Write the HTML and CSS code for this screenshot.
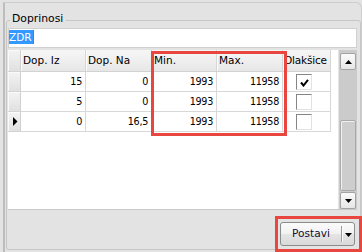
FILE: index.html
```html
<!DOCTYPE html>
<html>
<head>
<meta charset="utf-8">
<link rel="stylesheet" href="styles.css">
</head>
<body>
<div class="window">
  <div class="group">
    <span class="group-title">Doprinosi</span>
    <div class="textbox"><span class="sel">ZDR</span></div>
    <div class="grid">
      <div class="table">
        <div class="row head">
          <div class="cell ind"></div>
          <div class="cell">Dop. Iz</div>
          <div class="cell">Dop. Na</div>
          <div class="cell">Min.</div>
          <div class="cell">Max.</div>
          <div class="cell last">Olakšice</div>
        </div>
        <div class="row">
          <div class="cell ind"></div>
          <div class="cell num">15</div>
          <div class="cell num">0</div>
          <div class="cell num">1993</div>
          <div class="cell num">11958</div>
          <div class="cell chk"><span class="checkbox"><svg width="9" height="8" viewBox="0 0 9 8"><path d="M1 3.5 L3.5 6.5 L8 0.8" fill="none" stroke="#000" stroke-width="2"/></svg></span></div>
        </div>
        <div class="row">
          <div class="cell ind"></div>
          <div class="cell num">5</div>
          <div class="cell num">0</div>
          <div class="cell num">1993</div>
          <div class="cell num">11958</div>
          <div class="cell chk"><span class="checkbox"></span></div>
        </div>
        <div class="row">
          <div class="cell ind current"><svg width="5" height="9" viewBox="0 0 5 9"><path d="M0 0 L4.5 4.5 L0 9 Z" fill="#000"/></svg></div>
          <div class="cell num">0</div>
          <div class="cell num">16,5</div>
          <div class="cell num">1993</div>
          <div class="cell num">11958</div>
          <div class="cell chk"><span class="checkbox"></span></div>
        </div>
      </div>
      <div class="scrollbar">
        <div class="sb-btn"><svg width="7" height="4" viewBox="0 0 7 4"><path d="M0 4 L3.5 0 L7 4 Z" fill="#000"/></svg></div>
        <div class="sb-track"><div class="sb-thumb"></div></div>
        <div class="sb-btn"><svg width="7" height="4" viewBox="0 0 7 4"><path d="M0 0 L7 0 L3.5 4 Z" fill="#000"/></svg></div>
      </div>
    </div>
    <div class="actions">
      <div class="split-btn">
        <span class="btn-main">Postavi</span>
        <span class="btn-arrow"><svg width="7" height="4" viewBox="0 0 7 4"><path d="M0 0 L7 0 L3.5 4 Z" fill="#000"/></svg></span>
      </div>
    </div>
  </div>
</div>
<div class="hl hl-minmax"></div>
<div class="hl hl-button"></div>
</body>
</html>
```
FILE: styles.css
```css
body {
  margin: 0;
  width: 362px;
  height: 252px;
  overflow: hidden;
  position: relative;
  background: #e3e3e3;
  font-family: "DejaVu Sans", Verdana, sans-serif;
  font-size: 10.5px;
  color: #000;
}

.window {
  margin: 2px 0 0 3px;
  height: 250px;
  box-sizing: border-box;
  border-left: 2px solid #bdbdbd;
  border-top: 1px solid #cdcdcd;
  border-right: 1px solid #cdcdcd;
  border-top-right-radius: 6px;
  padding-left: 1px;
}

.group {
  position: relative;
  margin-top: 17px;
  height: 230px;
  box-sizing: border-box;
  border: 1px solid #c6c6c6;
  border-radius: 3px;
  padding: 7px 3px 0 1px;
}

.group-title {
  position: absolute;
  left: 3px;
  top: -9px;
  padding: 0 3px 0 2px;
  background: #e3e3e3;
  font-size: 10.8px;
  line-height: 14px;
}

.textbox {
  height: 20px;
  box-sizing: border-box;
  border: 1px solid #d0d0d0;
  background: #fff;
  padding-top: 1px;
  line-height: 14px;
}

.sel {
  display: inline-block;
  background: #3399ff;
  color: #fff;
  line-height: 14px;
  padding-right: 1px;
  border-right: 1px solid #cc6600;
}

.grid {
  margin-top: 2px;
  height: 160px;
  box-sizing: border-box;
  border-bottom: 1px solid #c8c8c8;
  background: #fff;
  display: flex;
}

.table {
  width: 323px;
}

.row {
  display: grid;
  grid-template-columns: 13px 65px 66px 65px 66px 48px;
  height: 20px;
}

.row.head {
  height: 22px;
}

.cell {
  box-sizing: border-box;
  border-right: 1px solid #d8d8d8;
  border-bottom: 1px solid #d8d8d8;
  padding: 0 3px 0 2px;
  line-height: 19px;
  white-space: nowrap;
  overflow: hidden;
}

.head .cell {
  line-height: 21px;
  background: linear-gradient(to bottom, #f6f6f6 0%, #efefef 50%, #e7e7e7 100%);
  border-right-color: #d6d6d6;
  border-bottom-color: #d2d2d2;
  box-shadow: inset 1px 0 0 #fbfbfb;
}

.head .cell.last {
  padding-left: 1px;
  letter-spacing: -0.2px;
}

.cell.ind {
  padding: 0;
  background: linear-gradient(to bottom, #f3f3f3 0%, #e9e9e9 55%, #e0e0e0 100%);
  border-right-color: #d0d0d0;
  border-bottom-color: #d4d4d4;
  box-shadow: inset 1px 1px 0 #fafafa;
}

.cell.current {
  display: flex;
  align-items: center;
  padding-left: 5px;
}

.cell.num {
  text-align: right;
  font-family: "DejaVu Sans Condensed", "DejaVu Sans", sans-serif;
  font-size: 10.7px;
  letter-spacing: -0.3px;
}

.cell.chk {
  display: flex;
  align-items: center;
  padding-left: 13px;
}

.checkbox {
  width: 16px;
  height: 16px;
  box-sizing: border-box;
  border: 1px solid;
  border-color: #858585 #e2e2e2 #e2e2e2 #858585;
  background: #fff;
  display: flex;
  align-items: flex-start;
  justify-content: flex-start;
  padding: 4px 0 0 3px;
}

.scrollbar {
  margin-left: auto;
  width: 19px;
  height: 159px;
  box-sizing: border-box;
  background: #cbcbcb;
  border-left: 1px solid #e4e4e4;
  padding: 3px 1px 0 1px;
  display: flex;
  flex-direction: column;
}

.sb-btn {
  height: 17px;
  box-sizing: border-box;
  border: 1px solid #a3a3a3;
  border-radius: 2px;
  background: linear-gradient(to bottom, #fafafa, #e6e6e6);
  display: flex;
  align-items: center;
  justify-content: center;
}

.sb-track {
  flex: 1;
  display: flex;
  flex-direction: column;
  padding: 50px 0 1px 0;
}

.sb-thumb {
  flex: 1;
  border: 1px solid #a9a9a9;
  border-radius: 2px;
  background: #cdcdcd;
  box-shadow: inset 1px 1px 0 #f2f2f2;
}

.actions {
  display: flex;
  justify-content: flex-end;
  padding: 12px 2px 0 0;
}

.split-btn {
  display: flex;
  width: 75px;
  height: 24px;
  box-sizing: border-box;
  border: 1px solid #8c8c8c;
  border-radius: 3px;
  background: linear-gradient(to bottom, #fbfbfb 0%, #f1f1f1 50%, #e4e4e4 52%, #d9d9d9 100%);
}

.btn-main {
  width: 60px;
  text-align: center;
  font-size: 10.6px;
  line-height: 21px;
  color: #101030;
}

.btn-arrow {
  flex: 1;
  margin: 3px 0;
  border-left: 1px solid #9c9c9c;
  box-shadow: inset 1px 0 0 #fafafa;
  display: flex;
  align-items: center;
  justify-content: center;
  padding-top: 1px;
}

.hl {
  position: absolute;
  box-sizing: border-box;
  border: 3px solid #e8463f;
}

.hl-minmax {
  left: 151px;
  top: 51px;
  width: 136px;
  height: 85px;
}

.hl-button {
  left: 275px;
  top: 216px;
  width: 87px;
  height: 36px;
}
```
